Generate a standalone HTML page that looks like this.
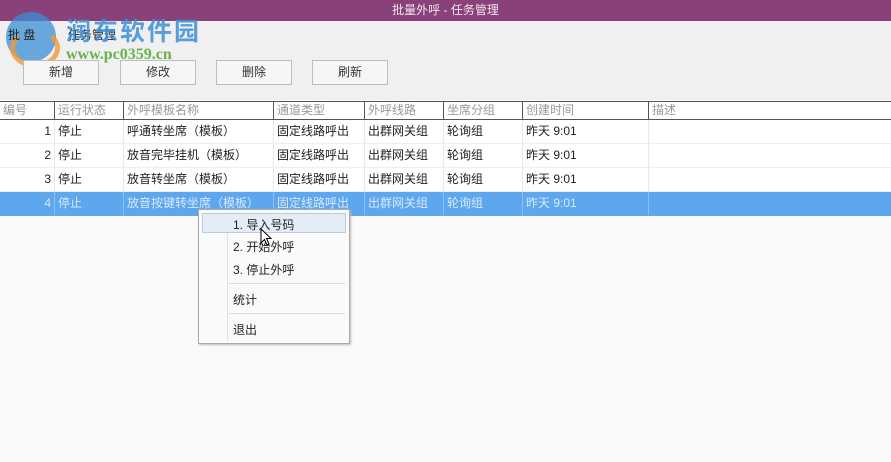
<html><head><style>
body{margin:0;width:891px;height:462px;overflow:hidden;background:#fafafa;font-family:"Liberation Sans","Noto Sans CJK SC",sans-serif;position:relative}
.a{position:absolute}
.title{left:0;top:0;width:891px;height:21px;background:#8a4079;color:#f0e6ee;font-size:12px;text-align:center;line-height:21px}
.top{left:0;top:21px;width:891px;height:79px;background:#f0f0f0}
.btn{top:60px;height:23px;width:74px;border:1px solid #bdbdbd;background:#f6f6f6;font-size:12px;text-align:center;line-height:23px;color:#333}
.hdr{top:101px;height:17px;left:0;width:891px;background:#fff;border-top:1px solid #555;border-bottom:1px solid #555}
.c{position:absolute;font-size:12px;white-space:nowrap;box-sizing:border-box;padding-left:3px}
.row{left:0;width:891px;height:24px;background:#fff;border-bottom:1px solid #eee;box-sizing:border-box}
.row .c{line-height:23px;color:#222;height:23px;border-left:1px solid #e8e8e8}
.sel{background:#5ea7ef}
.sel .c{color:#d7e9fb;border-left-color:#8fc0f3}
.hdr .c{line-height:17px;color:#999;height:17px;border-left:1px solid #555}
.menu{left:198px;top:209px;width:150px;height:133px;background:#fafafa;border:1px solid #aaa;box-shadow:1px 1px 2px #bbb}
.mi{position:absolute;left:34px;font-size:12px;color:#222}
</style></head><body>
<div class="a title">批量外呼 - 任务管理</div>
<div class="a top"></div>
<div class="a" style="left:6px;top:12px;width:50px;height:50px;border-radius:50%;background:#3a8fd6;opacity:.75"></div>
<div class="a" style="left:10px;top:28px;width:40px;height:30px;border-radius:50%;border:5px solid #f39a36;border-top-color:transparent;opacity:.8"></div>
<div class="a" style="left:8px;top:26px;font-size:12px;color:#222">批 盘</div>
<div class="a" style="left:68px;top:26px;font-size:12px;color:#222">任务管理</div>
<div class="a" style="left:66px;top:12px;font-size:25px;font-weight:bold;color:#3d8fd8;opacity:.85;letter-spacing:2px">润东软件园</div>
<div class="a" style="left:66px;top:46px;font-size:16px;font-weight:bold;color:#5aad3a;font-family:'Liberation Serif',serif;opacity:.9">www.pc0359.cn</div>
<div class="a btn" style="left:23px">新增</div>
<div class="a btn" style="left:120px">修改</div>
<div class="a btn" style="left:216px">删除</div>
<div class="a btn" style="left:312px">刷新</div>
<div class="a hdr">
<div class="c" style="left:0;border-left:none">编号</div><div class="c" style="left:54px">运行状态</div><div class="c" style="left:123px">外呼模板名称</div><div class="c" style="left:273px">通道类型</div><div class="c" style="left:364px">外呼线路</div><div class="c" style="left:443px">坐席分组</div><div class="c" style="left:522px">创建时间</div><div class="c" style="left:648px">描述</div>
</div>
<div class="a row" style="top:120px"><div class="c" style="left:0;width:54px;text-align:right;padding-right:3px;border:none">1</div><div class="c" style="left:54px">停止</div><div class="c" style="left:123px">呼通转坐席（模板）</div><div class="c" style="left:273px">固定线路呼出</div><div class="c" style="left:364px">出群网关组</div><div class="c" style="left:443px">轮询组</div><div class="c" style="left:522px">昨天 9:01</div><div class="c" style="left:648px"></div></div>
<div class="a row" style="top:144px"><div class="c" style="left:0;width:54px;text-align:right;padding-right:3px;border:none">2</div><div class="c" style="left:54px">停止</div><div class="c" style="left:123px">放音完毕挂机（模板）</div><div class="c" style="left:273px">固定线路呼出</div><div class="c" style="left:364px">出群网关组</div><div class="c" style="left:443px">轮询组</div><div class="c" style="left:522px">昨天 9:01</div><div class="c" style="left:648px"></div></div>
<div class="a row" style="top:168px"><div class="c" style="left:0;width:54px;text-align:right;padding-right:3px;border:none">3</div><div class="c" style="left:54px">停止</div><div class="c" style="left:123px">放音转坐席（模板）</div><div class="c" style="left:273px">固定线路呼出</div><div class="c" style="left:364px">出群网关组</div><div class="c" style="left:443px">轮询组</div><div class="c" style="left:522px">昨天 9:01</div><div class="c" style="left:648px"></div></div>
<div class="a row sel" style="top:192px;height:24px;border:none"><div class="c" style="left:0;width:54px;text-align:right;padding-right:3px;border:none">4</div><div class="c" style="left:54px">停止</div><div class="c" style="left:123px">放音按键转坐席（模板）</div><div class="c" style="left:273px">固定线路呼出</div><div class="c" style="left:364px">出群网关组</div><div class="c" style="left:443px">轮询组</div><div class="c" style="left:522px">昨天 9:01</div><div class="c" style="left:648px"></div></div>
<div class="a menu">
<div class="a" style="left:28px;top:2px;width:1px;height:128px;background:#e2e2e2"></div>
<div class="a" style="left:3px;top:3px;width:144px;height:20px;background:#e4ecf6;border:1px solid #b8cbe4;box-sizing:border-box"></div>
<div class="mi" style="top:6px">1. 导入号码</div>
<div class="mi" style="top:28px">2. 开始外呼</div>
<div class="mi" style="top:51px">3. 停止外呼</div>
<div class="a" style="left:30px;top:73px;width:116px;height:1px;background:#ddd"></div>
<div class="mi" style="top:81px">统计</div>
<div class="a" style="left:30px;top:103px;width:116px;height:1px;background:#ddd"></div>
<div class="mi" style="top:111px">退出</div>
</div>
<svg class="a" style="left:260px;top:228px" width="14" height="20"><path d="M1 1 L1 15 L4.5 11.5 L7 17 L9 16 L6.5 10.5 L11 10.5 Z" fill="#fff" stroke="#000" stroke-width="1"/></svg>
</body></html>
